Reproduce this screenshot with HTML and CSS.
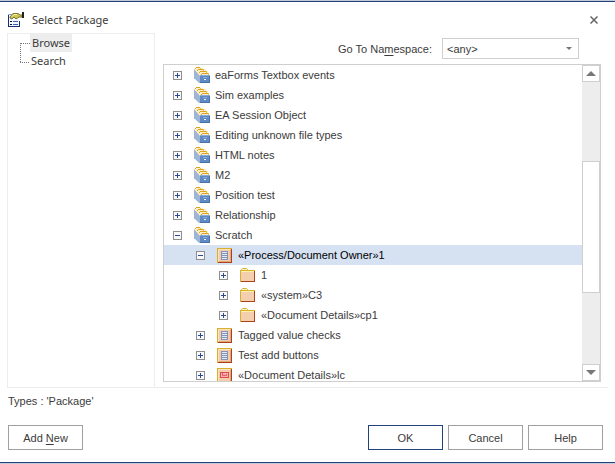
FILE: index.html
```html
<!DOCTYPE html>
<html lang="en">
<head>
<meta charset="UTF-8">
<meta name="viewport" content="width=device-width, initial-scale=1.0">
<title>Select Package</title>
<link rel="stylesheet" href="styles.css">
</head>
<body>

<!-- Shared icons -->
<svg class="sprite" aria-hidden="true">
  <symbol id="plus" viewBox="0 0 9 9">
    <rect x="0.5" y="0.5" width="8" height="8" fill="#f8f8f8" stroke="#8e8e8e"/>
    <path d="M2 4.5h5M4.5 2v5" stroke="#2c4a94"/>
  </symbol>
  <symbol id="minus" viewBox="0 0 9 9">
    <rect x="0.5" y="0.5" width="8" height="8" fill="#f8f8f8" stroke="#8e8e8e"/>
    <path d="M2 4.5h5" stroke="#2c4a94"/>
  </symbol>
  <symbol id="drawer" viewBox="0 0 16 16">
    <path d="M0 2L6 8V16H5L1 12H0z" fill="#9db6d6"/>
    <path d="M1 1H9V2H12V4H14V6H15V9H6L1 3z" fill="#fdedc8"/>
    <path d="M1 1.500H2M2 0.500H6M3 3.500H4M4 2.500H9M5 5.500H6M6 4.500H12M7 7.500H8M8 6.500H14" stroke="#d8a71e"/>
    <path d="M6.500 1V2M9.500 2V4M12.500 4V6M14.500 6V8" stroke="#e3bd55"/>
    <rect x="6" y="9" width="10" height="7" fill="#5f8ac4"/>
    <path d="M6 8.500H16" stroke="#86a9d6"/>
    <path d="M6 15.500H16M15.500 9V16" stroke="#4872ad"/>
    <rect x="9" y="10" width="4" height="1" fill="#86a9d6"/>
    <rect x="10" y="12" width="2" height="1" fill="#edf4fd"/>
  </symbol>
  <symbol id="view" viewBox="0 0 15 15">
    <rect width="15" height="15" fill="#f4cbab"/>
    <path d="M0 0.500H15M0.500 0V15" stroke="#d9b02c"/>
    <path d="M1 14.500H15M14.500 1V15" stroke="#a8441c"/>
    <path d="M1.500 13V1.500H13" fill="none" stroke="#fbe3c0"/>
    <path d="M2 13.500H13.500V2" fill="none" stroke="#e0a680"/>
    <rect x="4" y="3" width="7" height="9" fill="#8492b4"/>
    <path d="M5 4.500H10M5 6.500H10M5 8.500H10M5 10.500H10" stroke="#e4ebf8"/>
  </symbol>
  <symbol id="form" viewBox="0 0 15 15">
    <rect width="15" height="15" fill="#f4cbab"/>
    <path d="M0 0.500H15M0.500 0V15" stroke="#d9b02c"/>
    <path d="M1 14.500H15M14.500 1V15" stroke="#a8441c"/>
    <path d="M1.500 13V1.500H13" fill="none" stroke="#fbe3c0"/>
    <path d="M2 13.500H13.500V2" fill="none" stroke="#e0a680"/>
    <rect x="3.500" y="4.500" width="8" height="5" fill="#f9b0ac" stroke="#dc4a54"/>
    <path d="M5.500 5V7.500H9.500V6" fill="none" stroke="#e0606a"/>
  </symbol>
  <symbol id="folder" viewBox="0 0 15 15">
    <path d="M1.500 3V1.500L2.500 0.500H6.500L7.500 1.500V3" fill="#fff3cf" stroke="#d9b02c"/>
    <rect y="2" width="15" height="12" fill="#f4cfae"/>
    <path d="M0 2.500H15M0.500 2V14" stroke="#d9b02c"/>
    <path d="M1 3.500H14" stroke="#fbf3a8"/>
    <path d="M1 13.500H15M14.500 3V14" stroke="#a8441c"/>
  </symbol>
</svg>

<div class="dialog">
  <header class="titlebar">
    <svg class="app-icon" width="16" height="16" viewBox="0 0 16 16" aria-hidden="true">
      <path d="M0.500 15V2.500H11" fill="none" stroke="#8aa4e0"/>
      <rect x="1" y="3" width="10" height="12" fill="#f4f8ff"/>
      <path d="M0.500 3V14.500M0 14.500H12M11.500 9V15" stroke="#1c2c78"/>
      <path d="M2 9.500H4M2 12.500H4" stroke="#111"/>
      <path d="M5 9.500H10M5 12.500H10" stroke="#3a5fc0"/>
      <path d="M2 5L5 1.500H10L12 3H14V5H11L8 7L6 5L4 7L2 6z" fill="#cdc35a" stroke="#7a7430"/>
      <path d="M4 4.500L6 2.500H9" fill="none" stroke="#fff7a0"/>
      <rect x="14" y="0" width="2" height="6" fill="#222"/>
    </svg>
    <h1 class="title">Select Package</h1>
    <button type="button" class="close" aria-label="Close">
      <svg width="8" height="8" viewBox="0 0 8 8"><path d="M0.500 0.500L7.500 7.500M7.500 0.500L0.500 7.500" stroke="#666" stroke-width="1.500"/></svg>
    </button>
  </header>

  <main class="content">
    <nav class="sidebar">
      <ul class="modes">
        <li><a href="#browse" class="active">Browse</a></li>
        <li><a href="#search">Search</a></li>
      </ul>
    </nav>

    <section class="browser" id="browse">
      <div class="namespace">
        <label for="namespace">Go To Na<u>m</u>espace:</label>
        <div class="select">
          <select id="namespace">
            <option>&lt;any&gt;</option>
          </select>
          <svg class="caret" width="6" height="3" viewBox="0 0 6 3" aria-hidden="true"><path d="M0 0H6L3 3z" fill="#777"/></svg>
        </div>
      </div>

      <div class="tree-box">
        <ul class="tree">
          <li class="row"><button type="button" class="toggle" aria-label="Expand"><svg><use href="#plus"/></svg></button><svg class="icon"><use href="#drawer"/></svg><span>eaForms Textbox events</span></li>
          <li class="row"><button type="button" class="toggle" aria-label="Expand"><svg><use href="#plus"/></svg></button><svg class="icon"><use href="#drawer"/></svg><span>Sim examples</span></li>
          <li class="row"><button type="button" class="toggle" aria-label="Expand"><svg><use href="#plus"/></svg></button><svg class="icon"><use href="#drawer"/></svg><span>EA Session Object</span></li>
          <li class="row"><button type="button" class="toggle" aria-label="Expand"><svg><use href="#plus"/></svg></button><svg class="icon"><use href="#drawer"/></svg><span>Editing unknown file types</span></li>
          <li class="row"><button type="button" class="toggle" aria-label="Expand"><svg><use href="#plus"/></svg></button><svg class="icon"><use href="#drawer"/></svg><span>HTML notes</span></li>
          <li class="row"><button type="button" class="toggle" aria-label="Expand"><svg><use href="#plus"/></svg></button><svg class="icon"><use href="#drawer"/></svg><span>M2</span></li>
          <li class="row"><button type="button" class="toggle" aria-label="Expand"><svg><use href="#plus"/></svg></button><svg class="icon"><use href="#drawer"/></svg><span>Position test</span></li>
          <li class="row"><button type="button" class="toggle" aria-label="Expand"><svg><use href="#plus"/></svg></button><svg class="icon"><use href="#drawer"/></svg><span>Relationship</span></li>
          <li class="row"><button type="button" class="toggle" aria-label="Collapse"><svg><use href="#minus"/></svg></button><svg class="icon"><use href="#drawer"/></svg><span>Scratch</span></li>
          <li class="row level-2 selected"><button type="button" class="toggle" aria-label="Collapse"><svg><use href="#minus"/></svg></button><svg class="icon small"><use href="#view"/></svg><span>«Process/Document Owner»1</span></li>
          <li class="row level-3"><button type="button" class="toggle" aria-label="Expand"><svg><use href="#plus"/></svg></button><svg class="icon small"><use href="#folder"/></svg><span>1</span></li>
          <li class="row level-3"><button type="button" class="toggle" aria-label="Expand"><svg><use href="#plus"/></svg></button><svg class="icon small"><use href="#folder"/></svg><span>«system»C3</span></li>
          <li class="row level-3"><button type="button" class="toggle" aria-label="Expand"><svg><use href="#plus"/></svg></button><svg class="icon small"><use href="#folder"/></svg><span>«Document Details»cp1</span></li>
          <li class="row level-2"><button type="button" class="toggle" aria-label="Expand"><svg><use href="#plus"/></svg></button><svg class="icon small"><use href="#view"/></svg><span>Tagged value checks</span></li>
          <li class="row level-2"><button type="button" class="toggle" aria-label="Expand"><svg><use href="#plus"/></svg></button><svg class="icon small"><use href="#view"/></svg><span>Test add buttons</span></li>
          <li class="row level-2"><button type="button" class="toggle" aria-label="Expand"><svg><use href="#plus"/></svg></button><svg class="icon small"><use href="#form"/></svg><span>«Document Details»lc</span></li>
        </ul>
        <div class="scrollbar">
          <button type="button" class="arrow" aria-label="Scroll up"><svg width="10" height="5" viewBox="0 0 10 5"><path d="M0 5L5 0L10 5z" fill="#777"/></svg></button>
          <div class="track">
            <div class="thumb"></div>
          </div>
          <button type="button" class="arrow" aria-label="Scroll down"><svg width="10" height="5" viewBox="0 0 10 5"><path d="M0 0L5 5L10 0z" fill="#777"/></svg></button>
        </div>
      </div>
    </section>
  </main>

  <p class="types">Types : 'Package'</p>

  <footer class="actions">
    <button type="button" class="btn add">Add <u>N</u>ew</button>
    <button type="button" class="btn primary">OK</button>
    <button type="button" class="btn">Cancel</button>
    <button type="button" class="btn">Help</button>
  </footer>
</div>

</body>
</html>
```
FILE: styles.css
```css
* {
  box-sizing: border-box;
}
body {
  margin: 0;
  padding: 1px 0;
  font-family: "Liberation Sans", Arial, sans-serif;
  font-size: 11px;
  color: #3b3b3b;
  background-color: #c3cbd8;
}
ul {
  list-style: none;
  margin: 0;
  padding: 0;
}
button, select {
  font: inherit;
  color: inherit;
  padding: 0;
}
u {
  text-underline-offset: 2px;
}
.sprite {
  position: absolute;
  width: 0;
  height: 0;
}
.dialog {
  display: flex;
  flex-direction: column;
  height: calc(100vh - 2px);
  background-color: #fff;
  border-top: 1px solid #24427a;
  border-bottom: 1px solid #24427a;
}

/* Title bar */
.titlebar {
  display: flex;
  align-items: center;
  height: 31px;
  padding: 4px 17px 0 8px;
}
.title {
  flex: 1;
  margin: 0 0 0 8px;
  font-family: "Noto Sans", sans-serif;
  font-size: 11px;
  font-weight: normal;
}
.close {
  display: flex;
  border: none;
  background: none;
}

/* Main area */
.content {
  display: flex;
  flex: 1;
  min-height: 0;
  margin: 0 7px;
  border-bottom: 1px solid #ededed;
}
.sidebar {
  width: 148px;
  border: 1px solid #ededed;
  border-bottom: none;
  font-family: "Noto Sans", sans-serif;
}
.modes {
  padding-left: 12px;
}
.modes li {
  display: flex;
  height: 18px;
  line-height: 18px;
}
.modes li::before {
  content: "";
  width: 9px;
  height: 10px;
  border-bottom: 1px dotted #777;
}
.modes li:first-child::before {
  height: 18px;
  margin-top: 9px;
  border-top: 1px dotted #777;
  border-bottom: none;
  border-left: 1px dotted #777;
}
.modes a {
  padding: 0 2px;
  color: inherit;
  text-decoration: none;
}
.modes .active {
  background-color: #ededed;
}
.browser {
  display: flex;
  flex: 1;
  flex-direction: column;
  min-width: 0;
  padding: 5px 7px 5px 8px;
}
.namespace {
  display: flex;
  align-items: center;
  justify-content: flex-end;
  gap: 10px;
  padding-right: 22px;
  margin-bottom: 5px;
}
.select {
  position: relative;
  width: 137px;
}
.select select {
  display: block;
  width: 100%;
  height: 21px;
  padding-left: 4px;
  appearance: none;
  background-color: #fff;
  border: 1px solid #cfcfcf;
  border-radius: 0;
}
.caret {
  position: absolute;
  right: 7px;
  top: 9px;
}

/* Package tree */
.tree-box {
  display: flex;
  flex: 1;
  min-height: 0;
  border: 1px solid #cfcfcf;
}
.tree {
  flex: 1;
  overflow: hidden;
}
.row {
  display: flex;
  align-items: center;
  height: 20px;
  padding-left: 9px;
  white-space: nowrap;
}
.level-2 {
  padding-left: 32px;
}
.level-3 {
  padding-left: 55px;
}
.selected {
  color: #000;
  background-color: #d6e2f2;
}
.toggle {
  width: 9px;
  height: 9px;
  margin-right: 12px;
  border: none;
  background: none;
}
.toggle svg {
  display: block;
  width: 9px;
  height: 9px;
}
.icon {
  width: 16px;
  height: 16px;
  margin-right: 5px;
}
.small {
  width: 15px;
  height: 15px;
  margin-right: 6px;
}
.scrollbar {
  display: flex;
  flex-direction: column;
  width: 18px;
  background-color: #ededed;
}
.arrow {
  display: flex;
  align-items: center;
  justify-content: center;
  height: 17px;
  background-color: #fff;
  border: 1px solid #cfcfcf;
}
.track {
  display: flex;
  flex: 1;
  flex-direction: column;
  padding: 79px 0 71px;
}
.thumb {
  flex: 1;
  background-color: #fff;
  border: 1px solid #cfcfcf;
}

/* Bottom area */
.types {
  margin: 6px 8px 17px;
  line-height: 14px;
}
.actions {
  display: flex;
  gap: 5px;
  padding: 0 12px 12px 8px;
}
.btn {
  width: 75px;
  height: 25px;
  background-color: #fff;
  border: 1px solid #a0a0a0;
}
.add {
  margin-right: auto;
}
.primary {
  border-color: #24427a;
}
```
